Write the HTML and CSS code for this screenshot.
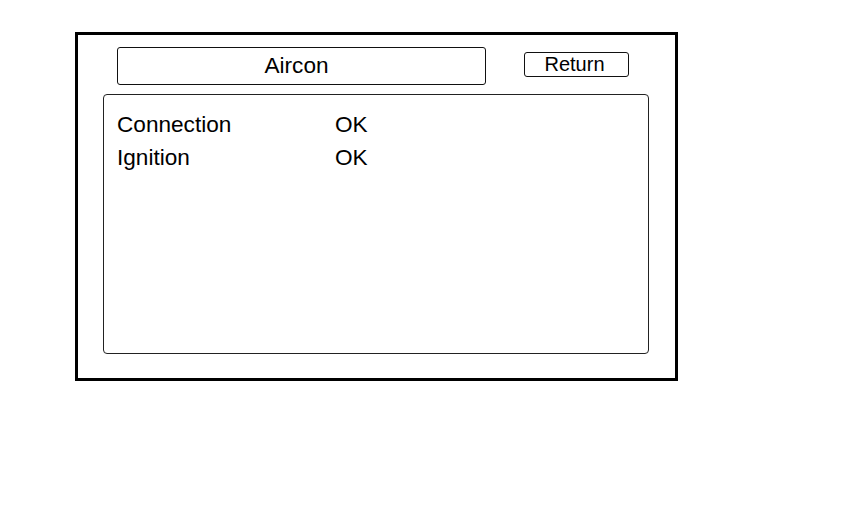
FILE: index.html
```html
<!DOCTYPE html>
<html>
<head>
<meta charset="utf-8">
<link rel="stylesheet" href="styles.css">
</head>
<body>
<div class="frame">
  <div class="header">
    <div class="title">Aircon</div>
    <div class="return">Return</div>
  </div>
  <div class="content">
    <div class="row"><span class="label">Connection</span><span class="value">OK</span></div>
    <div class="row"><span class="label">Ignition</span><span class="value">OK</span></div>
  </div>
</div>
</body>
</html>
```
FILE: styles.css
```css
html, body {
  margin: 0;
  padding: 0;
  background: #fff;
}
body {
  font-family: "Liberation Sans", Arial, sans-serif;
  color: #000;
}
.frame {
  box-sizing: border-box;
  margin-left: 75px;
  margin-top: 32px;
  width: 603px;
  height: 349px;
  border: 3px solid #000;
  padding: 12px 0 0 25px;
  display: flex;
  flex-direction: column;
}
.header {
  display: flex;
  align-items: flex-start;
  padding-left: 14px;
  gap: 38px;
}
.title {
  box-sizing: border-box;
  width: 369px;
  height: 38px;
  border: 1px solid #111;
  border-radius: 3px;
  font-size: 22.6px;
  line-height: 36px;
  text-align: center;
  padding-right: 10px;
}
.return {
  box-sizing: border-box;
  margin-top: 5px;
  width: 105px;
  height: 25px;
  border: 1px solid #111;
  border-radius: 3px;
  font-size: 20px;
  line-height: 23px;
  text-align: center;
  padding-right: 4px;
}
.content {
  box-sizing: border-box;
  margin-top: 9px;
  width: 546px;
  height: 260px;
  border: 1px solid #222;
  border-radius: 4px;
  padding: 13px 0 0 13px;
}
.row {
  display: flex;
  font-size: 22.6px;
  line-height: 33px;
}
.label {
  width: 218px;
}
```
